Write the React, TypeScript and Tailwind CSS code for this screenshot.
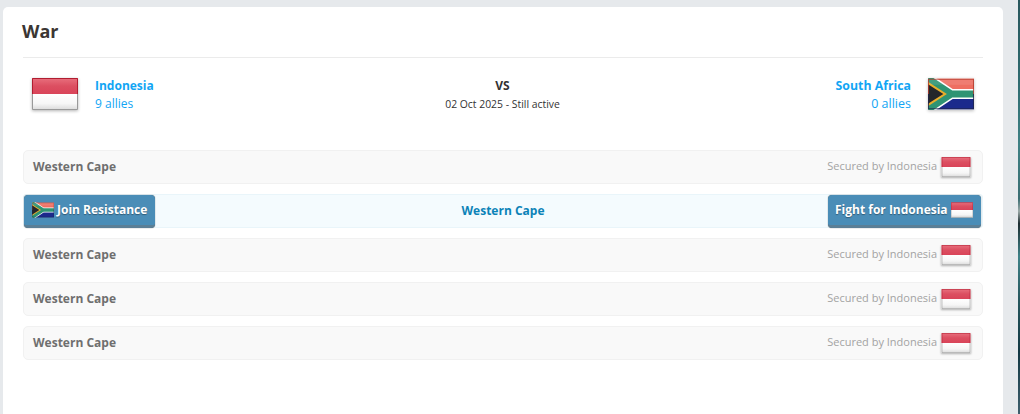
const font = "font-['Open_Sans','Noto_Sans',sans-serif]";

function Indonesia({ w, h }: { w: number; h: number }) {
  return (
    <svg width={w} height={h} viewBox="0 0 46 32" className="block shrink-0">
      <defs>
        <linearGradient id="idr" x1="0" y1="0" x2="0" y2="1">
          <stop offset="0" stopColor="#e8707e" />
          <stop offset="0.5" stopColor="#dc4f61" />
          <stop offset="1" stopColor="#d94459" />
        </linearGradient>
        <linearGradient id="idw" x1="0" y1="0" x2="0" y2="1">
          <stop offset="0" stopColor="#ffffff" />
          <stop offset="0.6" stopColor="#f6f6f6" />
          <stop offset="1" stopColor="#d9d9d9" />
        </linearGradient>
      </defs>
      <rect x="0" y="16" width="46" height="16" fill="url(#idw)" />
      <rect x="0" y="0" width="46" height="16" fill="url(#idr)" />
      <path d="M0.5 16V0.5H45.5V16" fill="none" stroke="#b11d30" />
      <path d="M0.5 16V31.5H45.5V16" fill="none" stroke="#999999" />
    </svg>
  );
}

function SouthAfrica({ w, h }: { w: number; h: number }) {
  return (
    <svg width={w} height={h} viewBox="0 0 90 60" className="block shrink-0">
      <rect width="90" height="30" fill="#ee6f62" />
      <rect y="30" width="90" height="30" fill="#1b2a8c" />
      <path d="M0 0L45 30H90M45 30L0 60" fill="none" stroke="#ffffff" strokeWidth="20" />
      <path d="M0 0L45 30H90M45 30L0 60" fill="none" stroke="#2f9473" strokeWidth="14" />
      <path d="M0 6L37 30L0 54Z" fill="#e9ad2b" />
      <path d="M0 11L30 30L0 49Z" fill="#24262a" />
      <rect x="0" y="0" width="90" height="12" fill="#ffffff" fillOpacity="0.1" />
      <path d="M1 30V1H89V30" fill="none" stroke="#b0392c" strokeOpacity="0.8" strokeWidth="2" />
      <path d="M1 30V59H89V30" fill="none" stroke="#20264a" strokeOpacity="0.8" strokeWidth="2" />
    </svg>
  );
}

function Row() {
  return (
    <div className="flex h-[34px] items-center justify-between rounded-[5px] border border-[#f1f1f1] bg-[#f9f9f9] pl-[9px] pr-[11px]">
      <span className="pb-[1px] text-[12px] font-bold text-[#6f6f6f]">Western Cape</span>
      <span className="flex items-center gap-[4px] text-[11px] text-[#a3a3a3]">
        <span className="pb-[1px]">Secured by Indonesia</span>
        <span className="shadow-[0_1px_2px_rgba(0,0,0,0.3)]"><Indonesia w={30} h={20} /></span>
      </span>
    </div>
  );
}

function ActionButton({ children, className }: { children: React.ReactNode; className: string }) {
  return (
    <button className={`flex h-[33px] items-center rounded-[4px] border-b-[3px] border-[#5b7f96] bg-[#4a8db7] text-[12px] font-bold whitespace-nowrap text-white shadow-[0_0_1px_rgba(0,0,0,0.7)] [text-shadow:0_1px_1px_rgba(0,0,0,0.35)] ${className}`}>
      {children}
    </button>
  );
}

export default function App() {
  return (
    <div className={`${font} flex h-[414px] w-[1020px] overflow-hidden bg-[#e6e9ec]`}>
      <main className="ml-[3px] mt-[7px] h-[407px] w-[1000px] rounded-t-[5px] bg-white px-[20px]">
        <h1 className="h-[51px] border-b border-[#ebebeb] pt-[10px] indent-[-1px] text-[18px] leading-[28px] font-bold text-[#3b3633]">War</h1>

        <section className="grid h-[92px] grid-cols-[1fr_auto_1fr] pt-[19px]">
          <div className="flex items-start pl-[9px]">
            <span className="mt-[1px] shadow-[0_1px_3px_rgba(0,0,0,0.3)]"><Indonesia w={46} h={32} /></span>
            <div className="ml-[17px] text-[12px] leading-[18px] text-[#12a5f4]">
              <div className="font-bold">Indonesia</div>
              <div>9 allies</div>
            </div>
          </div>
          <div className="mr-[1px] text-center text-[#333333]">
            <div className="text-[12px] leading-[18px] font-bold">VS</div>
            <div className="text-[10.4px] leading-[18px]">02 Oct 2025 - Still active</div>
          </div>
          <div className="flex items-start justify-end pr-[9px]">
            <div className="mr-[17px] text-right text-[12px] leading-[18px] text-[#12a5f4]">
              <div className="text-[12.3px] font-bold">South Africa</div>
              <div className="text-[12.5px]">0 allies</div>
            </div>
            <span className="mt-[1px] shadow-[0_1px_3px_rgba(0,0,0,0.25)]"><SouthAfrica w={46} h={32} /></span>
          </div>
        </section>

        <div className="flex flex-col gap-[10px]">
          <Row />
          <div className="relative flex h-[34px] items-center justify-center rounded-[3px] border border-[#e9f5fa] bg-[#f4fbfe] text-[12px] font-bold text-[#0c83b8]">
            Western Cape
            <ActionButton className="absolute left-[0px] top-[0px] w-[131px] pl-[8px]">
              <SouthAfrica w={22} h={16} />
              <span className="ml-[3px] pb-[1px]">Join Resistance</span>
            </ActionButton>
            <ActionButton className="absolute right-[0px] top-[0px] w-[153px] -translate-x-[1px] pl-[7px]">
              <span className="pb-[1px]">Fight for Indonesia</span>
              <span className="ml-[3px]"><Indonesia w={22} h={16} /></span>
            </ActionButton>
          </div>
          <Row />
          <Row />
          <Row />
        </div>
      </main>
      <div className="ml-auto h-full w-[2px] bg-[linear-gradient(180deg,#28565c_0%,#2f6b70_20%,#3f8184_35%,#3a6d72_48%,#9aa8a6_51%,#1c2c30_54%,#3f8288_62%,#27585f_72%,#123843_85%,#3f5f6d_100%)]" />
    </div>
  );
}
